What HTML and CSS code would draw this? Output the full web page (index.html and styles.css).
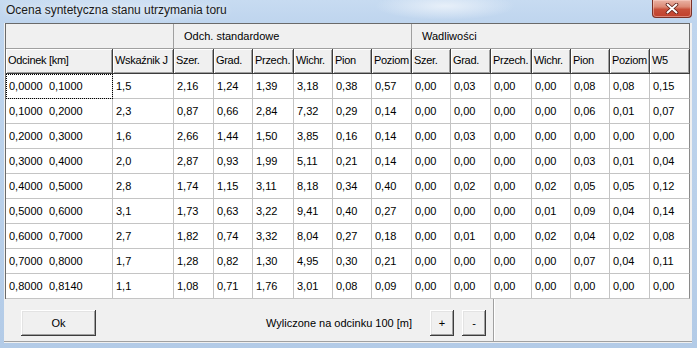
FILE: index.html
```html
<!DOCTYPE html>
<html lang="pl">
<head>
<meta charset="utf-8">
<title>Ocena syntetyczna stanu utrzymania toru</title>
<link rel="stylesheet" href="styles.css">
</head>
<body>
<div class="window">
  <div class="titlebar">
    <span class="title">Ocena syntetyczna stanu utrzymania toru</span>
    <div class="close">
      <svg width="14" height="11" viewBox="0 0 14 11">
        <path d="M2.5 1.5 L11.5 9.5 M11.5 1.5 L2.5 9.5" stroke="#5a1a12" stroke-width="3.6" stroke-linecap="round" fill="none"/>
        <path d="M2.5 1.5 L11.5 9.5 M11.5 1.5 L2.5 9.5" stroke="#ffffff" stroke-width="2" stroke-linecap="round" fill="none"/>
      </svg>
    </div>
  </div>
  <div class="client">
    <div class="grid">
      <div class="row">
        <div class="gh span2"></div>
        <div class="gh span6">Odch. standardowe</div>
        <div class="gh span7">Wadliwości</div>
      </div>
      <div class="row">
        <div class="ch">Odcinek [km]</div>
        <div class="ch">Wskaźnik J</div>
        <div class="ch">Szer.</div>
        <div class="ch">Grad.</div>
        <div class="ch">Przech.</div>
        <div class="ch">Wichr.</div>
        <div class="ch">Pion</div>
        <div class="ch">Poziom</div>
        <div class="ch">Szer.</div>
        <div class="ch">Grad.</div>
        <div class="ch">Przech.</div>
        <div class="ch">Wichr.</div>
        <div class="ch">Pion</div>
        <div class="ch">Poziom</div>
        <div class="ch">W5</div>
      </div>
      <div class="row">
        <div class="c focus"><span class="km">0,0000</span><span class="km">0,1000</span></div>
        <div class="c">1,5</div><div class="c">2,16</div><div class="c">1,24</div><div class="c">1,39</div><div class="c">3,18</div><div class="c">0,38</div><div class="c">0,57</div>
        <div class="c">0,00</div><div class="c">0,03</div><div class="c">0,00</div><div class="c">0,00</div><div class="c">0,08</div><div class="c">0,08</div><div class="c">0,15</div>
      </div>
      <div class="row">
        <div class="c"><span class="km">0,1000</span><span class="km">0,2000</span></div>
        <div class="c">2,3</div><div class="c">0,87</div><div class="c">0,66</div><div class="c">2,84</div><div class="c">7,32</div><div class="c">0,29</div><div class="c">0,14</div>
        <div class="c">0,00</div><div class="c">0,00</div><div class="c">0,00</div><div class="c">0,00</div><div class="c">0,06</div><div class="c">0,01</div><div class="c">0,07</div>
      </div>
      <div class="row">
        <div class="c"><span class="km">0,2000</span><span class="km">0,3000</span></div>
        <div class="c">1,6</div><div class="c">2,66</div><div class="c">1,44</div><div class="c">1,50</div><div class="c">3,85</div><div class="c">0,16</div><div class="c">0,14</div>
        <div class="c">0,00</div><div class="c">0,03</div><div class="c">0,00</div><div class="c">0,00</div><div class="c">0,00</div><div class="c">0,00</div><div class="c">0,00</div>
      </div>
      <div class="row">
        <div class="c"><span class="km">0,3000</span><span class="km">0,4000</span></div>
        <div class="c">2,0</div><div class="c">2,87</div><div class="c">0,93</div><div class="c">1,99</div><div class="c">5,11</div><div class="c">0,21</div><div class="c">0,14</div>
        <div class="c">0,00</div><div class="c">0,00</div><div class="c">0,00</div><div class="c">0,00</div><div class="c">0,03</div><div class="c">0,01</div><div class="c">0,04</div>
      </div>
      <div class="row">
        <div class="c"><span class="km">0,4000</span><span class="km">0,5000</span></div>
        <div class="c">2,8</div><div class="c">1,74</div><div class="c">1,15</div><div class="c">3,11</div><div class="c">8,18</div><div class="c">0,34</div><div class="c">0,40</div>
        <div class="c">0,00</div><div class="c">0,02</div><div class="c">0,00</div><div class="c">0,02</div><div class="c">0,05</div><div class="c">0,05</div><div class="c">0,12</div>
      </div>
      <div class="row">
        <div class="c"><span class="km">0,5000</span><span class="km">0,6000</span></div>
        <div class="c">3,1</div><div class="c">1,73</div><div class="c">0,63</div><div class="c">3,22</div><div class="c">9,41</div><div class="c">0,40</div><div class="c">0,27</div>
        <div class="c">0,00</div><div class="c">0,00</div><div class="c">0,00</div><div class="c">0,01</div><div class="c">0,09</div><div class="c">0,04</div><div class="c">0,14</div>
      </div>
      <div class="row">
        <div class="c"><span class="km">0,6000</span><span class="km">0,7000</span></div>
        <div class="c">2,7</div><div class="c">1,82</div><div class="c">0,74</div><div class="c">3,32</div><div class="c">8,04</div><div class="c">0,27</div><div class="c">0,18</div>
        <div class="c">0,00</div><div class="c">0,01</div><div class="c">0,00</div><div class="c">0,02</div><div class="c">0,04</div><div class="c">0,02</div><div class="c">0,08</div>
      </div>
      <div class="row">
        <div class="c"><span class="km">0,7000</span><span class="km">0,8000</span></div>
        <div class="c">1,7</div><div class="c">1,28</div><div class="c">0,82</div><div class="c">1,30</div><div class="c">4,95</div><div class="c">0,30</div><div class="c">0,21</div>
        <div class="c">0,00</div><div class="c">0,00</div><div class="c">0,00</div><div class="c">0,00</div><div class="c">0,07</div><div class="c">0,04</div><div class="c">0,11</div>
      </div>
      <div class="row">
        <div class="c"><span class="km">0,8000</span><span class="km">0,8140</span></div>
        <div class="c">1,1</div><div class="c">1,08</div><div class="c">0,71</div><div class="c">1,76</div><div class="c">3,01</div><div class="c">0,08</div><div class="c">0,09</div>
        <div class="c">0,00</div><div class="c">0,00</div><div class="c">0,00</div><div class="c">0,00</div><div class="c">0,00</div><div class="c">0,00</div><div class="c">0,00</div>
      </div>
    </div>
    <div class="footer">
      <div class="panel">
        <button class="btn ok">Ok</button>
        <div class="label">Wyliczone na odcinku 100 [m]</div>
        <button class="btn small">+</button>
        <button class="btn small minus">-</button>
      </div>
    </div>
  </div>
</div>
</body>
</html>
```

FILE: styles.css
```css
* { box-sizing: border-box; }

html, body {
  margin: 0;
  padding: 0;
}

body {
  width: 697px;
  height: 348px;
  overflow: hidden;
  font-family: "Liberation Sans", Arial, sans-serif;
  font-size: 11px;
  color: #000;
}

.window {
  width: 697px;
  height: 348px;
  padding: 0 5px 5px 4px;
  background:
    radial-gradient(ellipse 70px 14px at 445px 6px, rgba(235, 242, 250, 0.9), rgba(235, 242, 250, 0) 100%),
    radial-gradient(ellipse 110px 18px at 120px 8px, rgba(214, 229, 245, 0.8), rgba(214, 229, 245, 0) 100%),
    linear-gradient(to bottom, #c7dbf1 0px, #bfd5ee 22px, #b9d0ea 200px, #b3cbe7 348px);
  display: flex;
  flex-direction: column;
}

.titlebar {
  height: 23px;
  display: flex;
  align-items: flex-start;
}

.title {
  font-size: 12px;
  line-height: 14px;
  padding: 3px 0 0 2px;
  color: #1a1a1a;
  text-shadow: 0 0 6px rgba(255, 255, 255, 0.9);
}

.close {
  margin-left: auto;
  width: 40px;
  height: 18px;
  border: 1px solid #7a3026;
  border-top: none;
  border-radius: 0 0 4px 4px;
  background: linear-gradient(to bottom, #eab3a5 0%, #dc8a76 40%, #c8503a 55%, #c0402c 100%);
  box-shadow: inset 0 0 0 1px rgba(255, 220, 210, 0.45);
  display: flex;
  align-items: center;
  justify-content: center;
}

.client {
  width: 688px;
  height: 320px;
  background: #f0f0f0;
  padding-bottom: 1px;
}

.grid {
  margin-left: 1px;
  display: grid;
  grid-template-columns: 107px 61px 40px 39px 41px 39px 39px 40px 39px 40px 41px 39px 39px 40px 40px;
  grid-auto-rows: 25px;
  width: 685px;
  border-left: 1px solid #6a6a6a;
  border-top: 1px solid #6a6a6a;
}

.row { display: contents; }

.gh {
  background: #f0f0f0;
  border-right: 1px solid #a0a0a0;
  border-bottom: 1px solid #a0a0a0;
  padding-left: 10px;
  line-height: 24px;
  white-space: nowrap;
}

.span2 { grid-column: span 2; }
.span6 { grid-column: span 6; }
.span7 { grid-column: span 7; border-right-color: #6a6a6a; }

.ch {
  background: #f0f0f0;
  border-right: 1px solid #3c3c3c;
  border-bottom: 1px solid #3c3c3c;
  box-shadow: inset 1px 1px 0 #ffffff, inset -1px -1px 0 #a0a0a0;
  padding-left: 2px;
  line-height: 23px;
  letter-spacing: -0.3px;
  white-space: nowrap;
  overflow: hidden;
}

.c {
  background: #ffffff;
  border-right: 1px solid #c4c4c4;
  border-bottom: 1px solid #c4c4c4;
  padding-left: 3px;
  line-height: 24px;
  white-space: nowrap;
  overflow: hidden;
}

.row .c:last-child {
  border-right-color: #8a8a8a;
}

.focus {
  outline: 1px dotted #000;
  outline-offset: -1px;
}

.km {
  display: inline-block;
  width: 40px;
}

.footer {
  height: 43px;
  border-bottom: 1px solid #a0a0a0;
  display: flex;
}

.panel {
  width: 490px;
  height: 42px;
  border-right: 1px solid #a0a0a0;
  box-shadow: 1px 0 0 #ffffff;
  display: flex;
  align-items: flex-start;
  padding: 11px 0 0 17px;
}

.btn {
  font-family: "Liberation Sans", Arial, sans-serif;
  font-size: 11px;
  color: #000;
  background: #f0f0f0;
  border: none;
  padding: 0;
  margin: 0;
  height: 26px;
  box-shadow:
    inset -1px -1px 0 #3c3c3c,
    inset 1px 1px 0 #ffffff,
    inset -2px -2px 0 #a0a0a0,
    inset 2px 2px 0 #e3e3e3;
}

.ok { width: 75px; }

.label {
  width: 334px;
  text-align: right;
  padding-right: 18px;
  line-height: 26px;
  white-space: nowrap;
}

.small { width: 24px; }

.minus { margin-left: 8px; }
```
